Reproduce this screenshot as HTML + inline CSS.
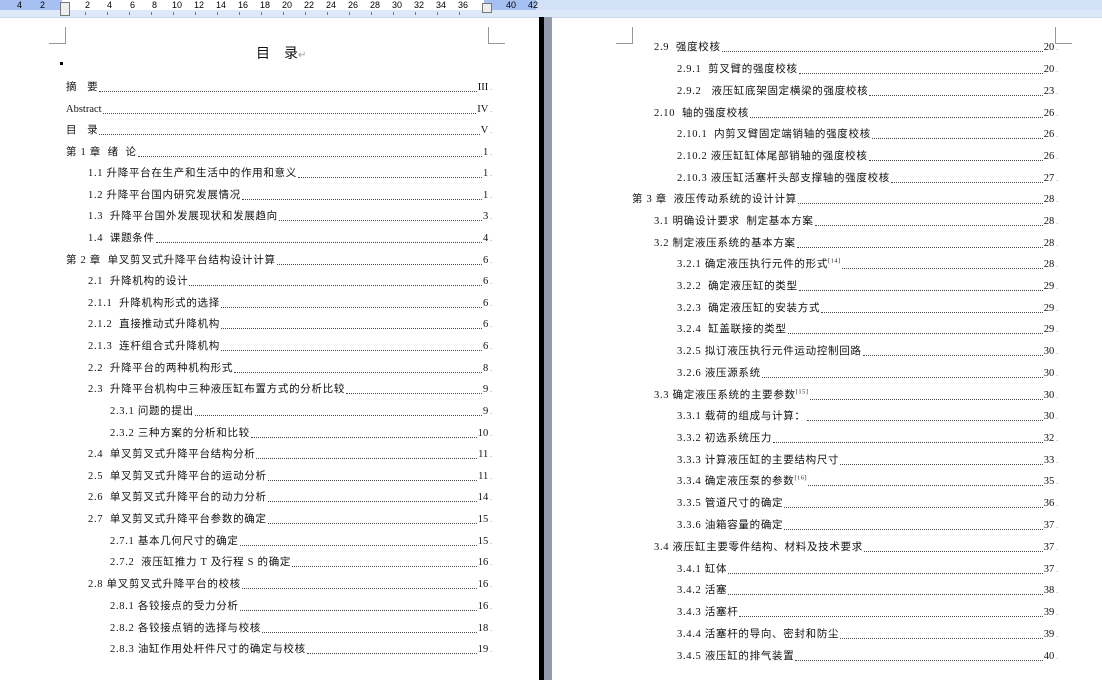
<!DOCTYPE html>
<html><head><meta charset="utf-8"><style>
body{margin:0;width:1102px;height:680px;overflow:hidden;background:#fff;position:relative;font-family:"Liberation Serif","Noto Sans CJK SC",serif;color:#111}
.r1{position:absolute;left:0;top:0;width:1102px;height:10px;background:#d4e2f8}
.r2{position:absolute;left:0;top:10px;width:1102px;height:7px;background:#dde8f8;border-bottom:1px solid #c8d6ee}
.dk{position:absolute;top:0;height:10px;background:#a7c0f2}
.num{position:absolute;top:0;font:9px "Liberation Sans",sans-serif;color:#000;line-height:10px}
.tick{position:absolute;top:12px;width:1px;height:3px;background:#777}
.corner{position:absolute;width:16px;height:16px;border-color:#999;border-style:solid;border-width:0}
.l{position:absolute;height:14px;display:flex;align-items:flex-end;font-size:10.5px;line-height:14px;white-space:nowrap;letter-spacing:0.7px}
.l .d{flex:1;border-bottom:1px dotted #444;margin:0 1px 3px 1px;height:1px}
.l .n{font-family:"Liberation Serif",serif;letter-spacing:0}
.l .m{color:#999;font-size:8px;margin-left:2px}
sup{font-size:6px;line-height:0}
</style></head><body>
<div class="r1"></div><div class="r2"></div>
<div class="dk" style="left:0;width:62px"></div>
<div class="dk" style="left:484px;width:52px"></div>
<div style="position:absolute;left:62px;top:0;width:422px;height:10px;background:#fff"></div>
<div style="position:absolute;left:60px;top:2px;width:8px;height:12px;background:#eee;border:1px solid #777"></div>
<div style="position:absolute;left:482px;top:3px;width:8px;height:8px;background:#eee;border:1px solid #777"></div>
<div class="num" style="left:17px">4</div><div class="num" style="left:40px">2</div>
<div class="num" style="left:85px">2</div><div class="num" style="left:107px">4</div><div class="num" style="left:130px">6</div><div class="num" style="left:152px">8</div><div class="num" style="left:172px">10</div><div class="num" style="left:194px">12</div><div class="num" style="left:216px">14</div><div class="num" style="left:238px">16</div><div class="num" style="left:260px">18</div><div class="num" style="left:282px">20</div><div class="num" style="left:304px">22</div><div class="num" style="left:326px">24</div><div class="num" style="left:348px">26</div><div class="num" style="left:370px">28</div><div class="num" style="left:392px">30</div><div class="num" style="left:414px">32</div><div class="num" style="left:436px">34</div><div class="num" style="left:458px">36</div><div class="num" style="left:506px">40</div><div class="num" style="left:528px">42</div>
<div class="tick" style="left:85px"></div><div class="tick" style="left:107px"></div><div class="tick" style="left:129px"></div><div class="tick" style="left:151px"></div><div class="tick" style="left:173px"></div><div class="tick" style="left:195px"></div><div class="tick" style="left:217px"></div><div class="tick" style="left:239px"></div><div class="tick" style="left:261px"></div><div class="tick" style="left:283px"></div><div class="tick" style="left:305px"></div><div class="tick" style="left:327px"></div><div class="tick" style="left:349px"></div><div class="tick" style="left:371px"></div><div class="tick" style="left:393px"></div><div class="tick" style="left:415px"></div><div class="tick" style="left:437px"></div><div class="tick" style="left:459px"></div>
<div style="position:absolute;left:539px;top:17px;width:5px;height:663px;background:#000"></div>
<div style="position:absolute;left:544px;top:17px;width:8px;height:663px;background:#939aab"></div>
<div class="corner" style="left:49px;top:27px;border-right-width:1px;border-bottom-width:1px"></div>
<div class="corner" style="left:488px;top:27px;border-left-width:1px;border-bottom-width:1px"></div>
<div class="corner" style="left:616px;top:27px;border-right-width:1px;border-bottom-width:1px"></div>
<div class="corner" style="left:1055px;top:27px;border-left-width:1px;border-bottom-width:1px"></div>
<div style="position:absolute;left:256px;top:43px;font-size:14px;font-family:'Noto Sans CJK SC',sans-serif">目<span style="display:inline-block;width:14px"></span>录<span style="color:#999;font-size:10px">↵</span></div>
<div style="position:absolute;left:60px;top:62px;width:3px;height:3px;background:#000"></div>

<div class="l" style="left:66px;width:427px;top:81px"><span>摘 &nbsp;&nbsp;要</span><span class="d"></span><span class="n">III</span><span class="m">.</span></div>
<div class="l" style="left:66px;width:427px;top:103px"><span style="letter-spacing:0">Abstract</span><span class="d"></span><span class="n">IV</span><span class="m">.</span></div>
<div class="l" style="left:66px;width:427px;top:124px"><span>目 &nbsp;&nbsp;录</span><span class="d"></span><span class="n">V</span><span class="m">.</span></div>
<div class="l" style="left:66px;width:427px;top:146px"><span>第 1 章 &nbsp;绪 &nbsp;论</span><span class="d"></span><span class="n">1</span><span class="m">.</span></div>
<div class="l" style="left:88px;width:405px;top:167px"><span>1.1 升降平台在生产和生活中的作用和意义</span><span class="d"></span><span class="n">1</span><span class="m">.</span></div>
<div class="l" style="left:88px;width:405px;top:189px"><span>1.2 升降平台国内研究发展情况</span><span class="d"></span><span class="n">1</span><span class="m">.</span></div>
<div class="l" style="left:88px;width:405px;top:210px"><span>1.3 &nbsp;升降平台国外发展现状和发展趋向</span><span class="d"></span><span class="n">3</span><span class="m">.</span></div>
<div class="l" style="left:88px;width:405px;top:232px"><span>1.4 &nbsp;课题条件</span><span class="d"></span><span class="n">4</span><span class="m">.</span></div>
<div class="l" style="left:66px;width:427px;top:254px"><span>第 2 章 &nbsp;单叉剪叉式升降平台结构设计计算</span><span class="d"></span><span class="n">6</span><span class="m">.</span></div>
<div class="l" style="left:88px;width:405px;top:275px"><span>2.1 &nbsp;升降机构的设计</span><span class="d"></span><span class="n">6</span><span class="m">.</span></div>
<div class="l" style="left:88px;width:405px;top:297px"><span>2.1.1 &nbsp;升降机构形式的选择</span><span class="d"></span><span class="n">6</span><span class="m">.</span></div>
<div class="l" style="left:88px;width:405px;top:318px"><span>2.1.2 &nbsp;直接推动式升降机构</span><span class="d"></span><span class="n">6</span><span class="m">.</span></div>
<div class="l" style="left:88px;width:405px;top:340px"><span>2.1.3 &nbsp;连杆组合式升降机构</span><span class="d"></span><span class="n">6</span><span class="m">.</span></div>
<div class="l" style="left:88px;width:405px;top:362px"><span>2.2 &nbsp;升降平台的两种机构形式</span><span class="d"></span><span class="n">8</span><span class="m">.</span></div>
<div class="l" style="left:88px;width:405px;top:383px"><span>2.3 &nbsp;升降平台机构中三种液压缸布置方式的分析比较</span><span class="d"></span><span class="n">9</span><span class="m">.</span></div>
<div class="l" style="left:110px;width:383px;top:405px"><span>2.3.1 问题的提出</span><span class="d"></span><span class="n">9</span><span class="m">.</span></div>
<div class="l" style="left:110px;width:383px;top:427px"><span>2.3.2 三种方案的分析和比较</span><span class="d"></span><span class="n">10</span><span class="m">.</span></div>
<div class="l" style="left:88px;width:405px;top:448px"><span>2.4 &nbsp;单叉剪叉式升降平台结构分析</span><span class="d"></span><span class="n">11</span><span class="m">.</span></div>
<div class="l" style="left:88px;width:405px;top:470px"><span>2.5 &nbsp;单叉剪叉式升降平台的运动分析</span><span class="d"></span><span class="n">11</span><span class="m">.</span></div>
<div class="l" style="left:88px;width:405px;top:491px"><span>2.6 &nbsp;单叉剪叉式升降平台的动力分析</span><span class="d"></span><span class="n">14</span><span class="m">.</span></div>
<div class="l" style="left:88px;width:405px;top:513px"><span>2.7 &nbsp;单叉剪叉式升降平台参数的确定</span><span class="d"></span><span class="n">15</span><span class="m">.</span></div>
<div class="l" style="left:110px;width:383px;top:535px"><span>2.7.1 基本几何尺寸的确定</span><span class="d"></span><span class="n">15</span><span class="m">.</span></div>
<div class="l" style="left:110px;width:383px;top:556px"><span>2.7.2 &nbsp;液压缸推力 T 及行程 S 的确定</span><span class="d"></span><span class="n">16</span><span class="m">.</span></div>
<div class="l" style="left:88px;width:405px;top:578px"><span>2.8 单叉剪叉式升降平台的校核</span><span class="d"></span><span class="n">16</span><span class="m">.</span></div>
<div class="l" style="left:110px;width:383px;top:600px"><span>2.8.1 各铰接点的受力分析</span><span class="d"></span><span class="n">16</span><span class="m">.</span></div>
<div class="l" style="left:110px;width:383px;top:622px"><span>2.8.2 各铰接点销的选择与校核</span><span class="d"></span><span class="n">18</span><span class="m">.</span></div>
<div class="l" style="left:110px;width:383px;top:643px"><span>2.8.3 油缸作用处杆件尺寸的确定与校核</span><span class="d"></span><span class="n">19</span><span class="m">.</span></div>

<div class="l" style="left:654px;width:405px;top:41px"><span>2.9 &nbsp;强度校核</span><span class="d"></span><span class="n">20</span><span class="m">.</span></div>
<div class="l" style="left:677px;width:382px;top:63px"><span>2.9.1 &nbsp;剪叉臂的强度校核</span><span class="d"></span><span class="n">20</span><span class="m">.</span></div>
<div class="l" style="left:677px;width:382px;top:85px"><span>2.9.2 &nbsp;&nbsp;液压缸底架固定横梁的强度校核</span><span class="d"></span><span class="n">23</span><span class="m">.</span></div>
<div class="l" style="left:654px;width:405px;top:107px"><span>2.10 &nbsp;轴的强度校核</span><span class="d"></span><span class="n">26</span><span class="m">.</span></div>
<div class="l" style="left:677px;width:382px;top:128px"><span>2.10.1 &nbsp;内剪叉臂固定端销轴的强度校核</span><span class="d"></span><span class="n">26</span><span class="m">.</span></div>
<div class="l" style="left:677px;width:382px;top:150px"><span>2.10.2 液压缸缸体尾部销轴的强度校核</span><span class="d"></span><span class="n">26</span><span class="m">.</span></div>
<div class="l" style="left:677px;width:382px;top:172px"><span>2.10.3 液压缸活塞杆头部支撑轴的强度校核</span><span class="d"></span><span class="n">27</span><span class="m">.</span></div>
<div class="l" style="left:632px;width:427px;top:193px"><span>第 3 章 &nbsp;液压传动系统的设计计算</span><span class="d"></span><span class="n">28</span><span class="m">.</span></div>
<div class="l" style="left:654px;width:405px;top:215px"><span>3.1 明确设计要求 &nbsp;制定基本方案</span><span class="d"></span><span class="n">28</span><span class="m">.</span></div>
<div class="l" style="left:654px;width:405px;top:237px"><span>3.2 制定液压系统的基本方案</span><span class="d"></span><span class="n">28</span><span class="m">.</span></div>
<div class="l" style="left:677px;width:382px;top:258px"><span>3.2.1 确定液压执行元件的形式<sup>[14]</sup></span><span class="d"></span><span class="n">28</span><span class="m">.</span></div>
<div class="l" style="left:677px;width:382px;top:280px"><span>3.2.2 &nbsp;确定液压缸的类型</span><span class="d"></span><span class="n">29</span><span class="m">.</span></div>
<div class="l" style="left:677px;width:382px;top:302px"><span>3.2.3 &nbsp;确定液压缸的安装方式</span><span class="d"></span><span class="n">29</span><span class="m">.</span></div>
<div class="l" style="left:677px;width:382px;top:323px"><span>3.2.4 &nbsp;缸盖联接的类型</span><span class="d"></span><span class="n">29</span><span class="m">.</span></div>
<div class="l" style="left:677px;width:382px;top:345px"><span>3.2.5 拟订液压执行元件运动控制回路</span><span class="d"></span><span class="n">30</span><span class="m">.</span></div>
<div class="l" style="left:677px;width:382px;top:367px"><span>3.2.6 液压源系统</span><span class="d"></span><span class="n">30</span><span class="m">.</span></div>
<div class="l" style="left:654px;width:405px;top:389px"><span>3.3 确定液压系统的主要参数<sup>[15]</sup></span><span class="d"></span><span class="n">30</span><span class="m">.</span></div>
<div class="l" style="left:677px;width:382px;top:410px"><span>3.3.1 载荷的组成与计算：</span><span class="d"></span><span class="n">30</span><span class="m">.</span></div>
<div class="l" style="left:677px;width:382px;top:432px"><span>3.3.2 初选系统压力</span><span class="d"></span><span class="n">32</span><span class="m">.</span></div>
<div class="l" style="left:677px;width:382px;top:454px"><span>3.3.3 计算液压缸的主要结构尺寸</span><span class="d"></span><span class="n">33</span><span class="m">.</span></div>
<div class="l" style="left:677px;width:382px;top:475px"><span>3.3.4 确定液压泵的参数<sup>[16]</sup></span><span class="d"></span><span class="n">35</span><span class="m">.</span></div>
<div class="l" style="left:677px;width:382px;top:497px"><span>3.3.5 管道尺寸的确定</span><span class="d"></span><span class="n">36</span><span class="m">.</span></div>
<div class="l" style="left:677px;width:382px;top:519px"><span>3.3.6 油箱容量的确定</span><span class="d"></span><span class="n">37</span><span class="m">.</span></div>
<div class="l" style="left:654px;width:405px;top:541px"><span>3.4 液压缸主要零件结构、材料及技术要求</span><span class="d"></span><span class="n">37</span><span class="m">.</span></div>
<div class="l" style="left:677px;width:382px;top:563px"><span>3.4.1 缸体</span><span class="d"></span><span class="n">37</span><span class="m">.</span></div>
<div class="l" style="left:677px;width:382px;top:584px"><span>3.4.2 活塞</span><span class="d"></span><span class="n">38</span><span class="m">.</span></div>
<div class="l" style="left:677px;width:382px;top:606px"><span>3.4.3 活塞杆</span><span class="d"></span><span class="n">39</span><span class="m">.</span></div>
<div class="l" style="left:677px;width:382px;top:628px"><span>3.4.4 活塞杆的导向、密封和防尘</span><span class="d"></span><span class="n">39</span><span class="m">.</span></div>
<div class="l" style="left:677px;width:382px;top:650px"><span>3.4.5 液压缸的排气装置</span><span class="d"></span><span class="n">40</span><span class="m">.</span></div>
</body></html>
